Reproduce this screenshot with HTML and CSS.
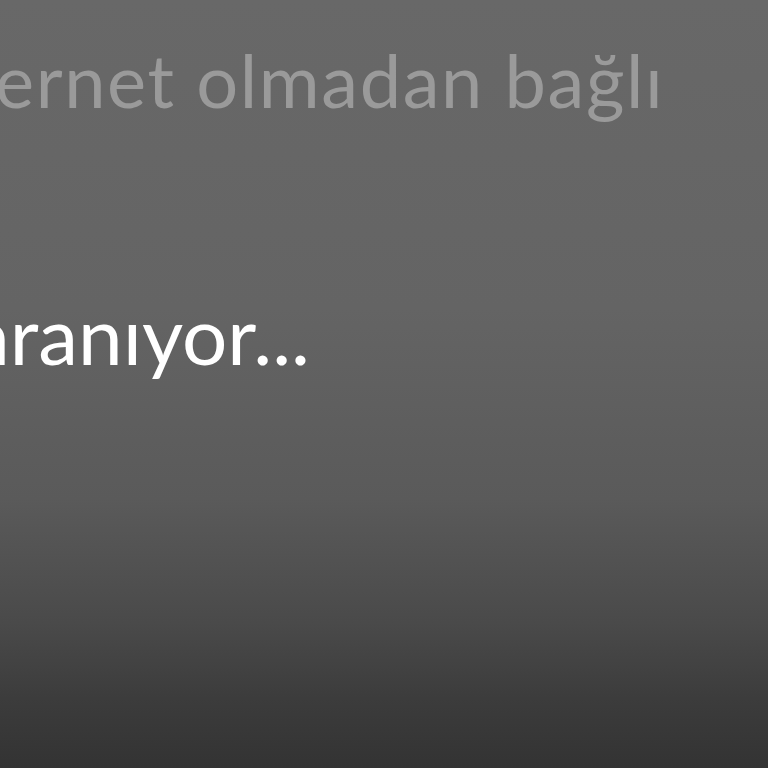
FILE: index.html
```html
<!DOCTYPE html>
<html lang="tr">
<head>
<meta charset="utf-8">
<link rel="stylesheet" href="styles.css">
</head>
<body>
<main class="screen">
  <p class="status">ernet olmadan bağlı</p>
  <p class="search">aranıyor...</p>
</main>
</body>
</html>
```
FILE: styles.css
```css
html, body {
  margin: 0;
  height: 100%;
}
body {
  background: linear-gradient(to bottom, #686868 0%, #646464 40%, #5a5a5a 65%, #4a4a4a 81%, #3c3c3c 91%, #333333 100%);
  font-family: "Lato", "Noto Sans", sans-serif;
  overflow: hidden;
}
.screen {
  display: flex;
  flex-direction: column;
  height: 768px;
}
.status {
  margin: 38px 0 0 -5px;
  font-size: 74px;
  line-height: 84px;
  letter-spacing: 1.6px;
  color: #9a9a9a;
  white-space: nowrap;
}
.search {
  margin: 162px 0 0 -30px;
  font-size: 80px;
  line-height: 100px;
  color: #ffffff;
  white-space: nowrap;
}
```
